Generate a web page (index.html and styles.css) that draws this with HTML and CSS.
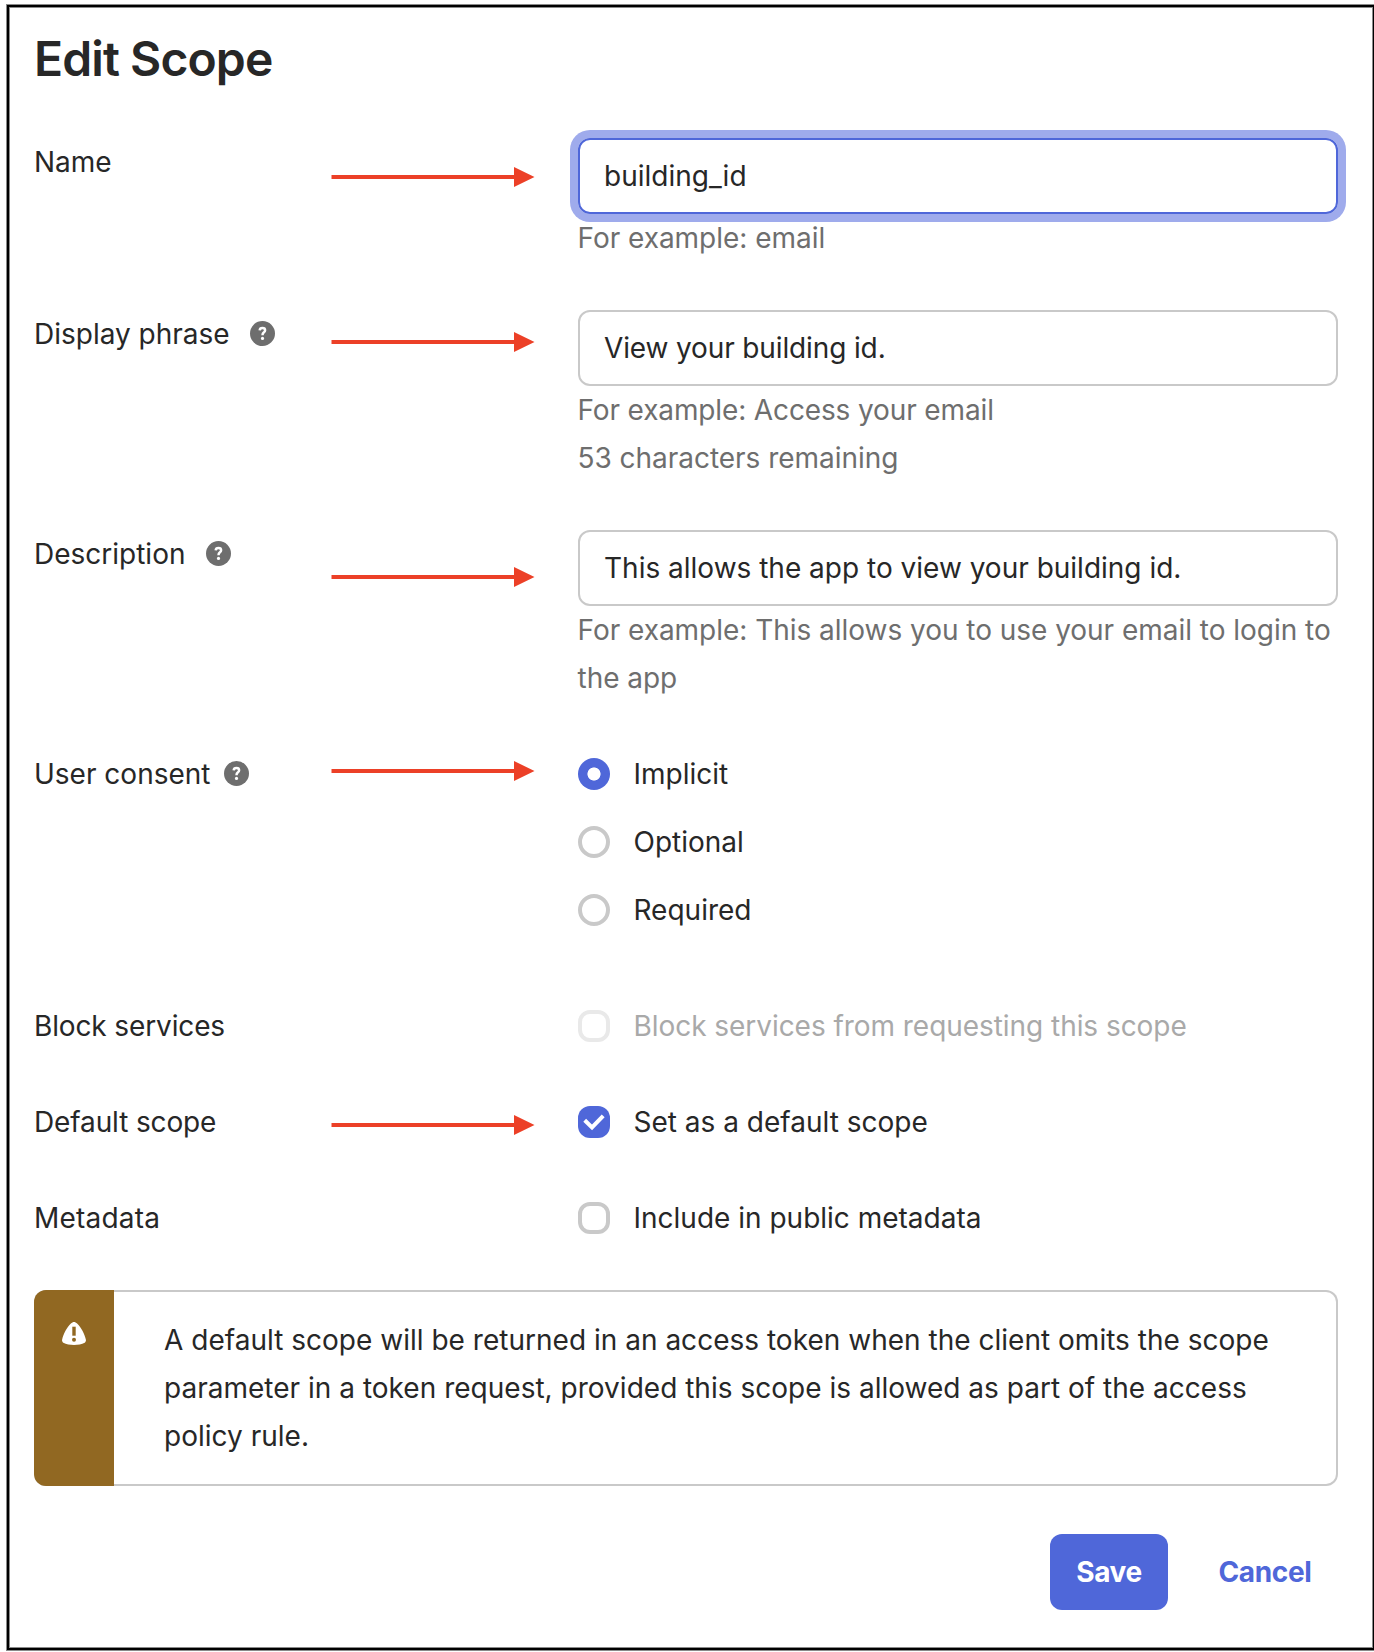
FILE: index.html
```html
<!DOCTYPE html>
<html lang="en">
<head>
<meta charset="utf-8">
<title>Edit Scope</title>
<link rel="stylesheet" href="styles.css">
</head>
<body>
<svg class="defs" width="0" height="0" aria-hidden="true">
  <symbol id="arrow" viewBox="0 0 204 20">
    <path d="M0.5 8H184V12H0.5zM183 0L203.5 10L183 20z" fill="#ec4027"/>
  </symbol>
  <symbol id="help" viewBox="0 0 25 25">
    <circle cx="12.5" cy="12.5" r="12.5" fill="#6e6e6e"/>
    <path d="M9.7 9.4C9.8 7.8 10.9 7.1 12.5 7.1C14.2 7.1 15.1 8 15.1 9.2C15.1 10.4 14.5 10.9 13.7 11.5C12.9 12.1 12.5 12.5 12.5 14.3" fill="none" stroke="#fff" stroke-width="2.5"/>
    <circle cx="12.5" cy="17.4" r="1.6" fill="#fff"/>
  </symbol>
</svg>
<main class="frame">
  <h1 class="title">Edit Scope</h1>
  <form class="form">
    <div class="row">
      <div class="label">Name</div>
      <svg class="arrow arrow-name"><use href="#arrow"/></svg>
      <div class="field">
        <div class="input focused">building_id</div>
        <p class="hint">For example: email</p>
      </div>
    </div>
    <div class="row">
      <div class="label">Display phrase<svg class="help help-display"><use href="#help"/></svg></div>
      <svg class="arrow arrow-display"><use href="#arrow"/></svg>
      <div class="field">
        <div class="input tight">View your building id.</div>
        <p class="hint"><span class="tight">For example: Access your email</span><br>53 characters remaining</p>
      </div>
    </div>
    <div class="row">
      <div class="label">Description<svg class="help help-description"><use href="#help"/></svg></div>
      <svg class="arrow arrow-description"><use href="#arrow"/></svg>
      <div class="field">
        <div class="input">This allows the app to view your building id.</div>
        <p class="hint">For example: This allows you to use your email to login to<br>the app</p>
      </div>
    </div>
    <div class="row row-consent">
      <div class="label">User consent<svg class="help help-consent"><use href="#help"/></svg></div>
      <svg class="arrow arrow-consent"><use href="#arrow"/></svg>
      <div class="field options">
        <div class="option"><span class="radio selected"></span>Implicit</div>
        <div class="option"><span class="radio"></span>Optional</div>
        <div class="option"><span class="radio"></span>Required</div>
      </div>
    </div>
    <div class="row">
      <div class="label tight">Block services</div>
      <div class="field">
        <div class="option disabled"><span class="checkbox"></span>Block services from requesting this scope</div>
      </div>
    </div>
    <div class="row">
      <div class="label tight">Default scope</div>
      <svg class="arrow arrow-default"><use href="#arrow"/></svg>
      <div class="field">
        <div class="option">
          <span class="checkbox checked"><svg width="32" height="32" viewBox="0 0 32 32"><path d="M6.7 14.3L14 21.4L25.2 9.8" fill="none" stroke="#fff" stroke-width="4"/></svg></span>Set as a default scope
        </div>
      </div>
    </div>
    <div class="row">
      <div class="label loose">Metadata</div>
      <div class="field">
        <div class="option"><span class="checkbox"></span>Include in public metadata</div>
      </div>
    </div>
  </form>
  <section class="alert">
    <div class="alert-side">
      <svg width="24" height="23" viewBox="0 0 24 23">
        <path d="M12 0C13 0 14.2.7 15.1 1.6C19 5.5 22.6 11.7 23.9 17.8C24.1 18.9 23.7 20.2 22.7 20.7C19.8 22.2 16 22.9 12 22.9S4.2 22.2 1.3 20.7C.3 20.2-.1 18.9.1 17.8C1.4 11.7 5 5.5 8.9 1.6C9.8.7 11 0 12 0z" fill="#fff"/>
        <path d="M10.3 4.7H13.7V13.7H10.3z" fill="#916822"/>
        <circle cx="12" cy="17.7" r="2" fill="#916822"/>
      </svg>
    </div>
    <p class="alert-text">A default scope will be returned in an access token when the client omits the scope<br>parameter in a token request, provided this scope is allowed as part of the access<br>policy rule.</p>
  </section>
  <div class="actions">
    <button class="button save" type="button">Save</button>
    <button class="button cancel" type="button">Cancel</button>
  </div>
</main>
</body>
</html>
```
FILE: styles.css
```css
* { box-sizing: border-box; }

html { background: #fff; overflow: hidden; }

body {
  margin: 0;
  padding: 5px 0 0 7px;
  height: 1652px;
  overflow: hidden;
  background: #fff;
  color: #272727;
  font: 400 28px/48px Inter, "Liberation Sans", sans-serif;
}

.defs { position: absolute; }

.frame {
  width: 1368px;
  height: 1645px;
  padding: 22px 35px 0 25px;
  border: 2px solid #000;
  box-shadow: 0 0 0 1px #8a8a8a, inset 0 0 0 1px #8a8a8a;
}

.title {
  margin: 0 0 49px;
  font-size: 48px;
  line-height: 60px;
  font-weight: 600;
  letter-spacing: -0.9px;
}

.form { display: flex; flex-direction: column; gap: 48px; }

.row { display: grid; grid-template-columns: 297px 247px 760px; }

.label { display: flex; align-items: center; height: 48px; white-space: nowrap; }

.tight { letter-spacing: -0.13px; }
.loose { letter-spacing: 0.2px; }

.field { grid-column: 3; }

.help { width: 25px; height: 25px; flex: none; margin-top: -1px; }
.help-display { margin-left: 20px; }
.help-description { margin-left: 21px; }
.help-consent { margin-left: 13px; }

.arrow { width: 204px; height: 20px; }
.arrow-name { margin-top: 29px; }
.arrow-display { margin-top: 22px; }
.arrow-description { margin-top: 37px; }
.arrow-consent { margin-top: 11px; }
.arrow-default { margin-top: 17px; }

.input {
  display: flex;
  align-items: center;
  height: 76px;
  padding: 0 24px;
  border: 2px solid #c9c9c9;
  border-radius: 12px;
}

.focused { border-color: #4f67d9; box-shadow: 0 0 0 8px #9fabec; }

.hint { margin: 0 0 0 -0.5px; color: #6e6e6e; white-space: nowrap; letter-spacing: -0.03px; }

.row-consent { margin-bottom: 20px; }

.options { display: flex; flex-direction: column; gap: 20px; }

.option { display: flex; align-items: center; gap: 23.5px; height: 48px; white-space: nowrap; }

.radio, .checkbox {
  flex: none;
  width: 32px;
  height: 32px;
  border: 4px solid #c9c9c9;
}

.radio { border-radius: 50%; }
.checkbox { border-radius: 12px; }
.selected { border: 0; background: radial-gradient(circle, #fff 6.2px, #4f67d9 6.9px); }
.checked { display: flex; border: 0; background: #4f67d9; }
.disabled { color: #a9a9a9; letter-spacing: -0.05px; }
.disabled .checkbox { border-color: #e9e9e9; }

.alert {
  display: flex;
  width: 1304px;
  height: 196px;
  margin-top: 48px;
  border: 2px solid #c9c9c9;
  border-left: 0;
  border-radius: 12px;
}

.alert-side {
  width: 80px;
  margin: -2px 0;
  padding: 32px 28px;
  border-radius: 12px 0 0 12px;
  background: #916822;
  line-height: 0;
}

.alert-text { margin: 0; padding: 24px 0 0 50px; white-space: nowrap; letter-spacing: 0.015px; }

.actions { display: flex; justify-content: flex-end; gap: 24px; width: 1304px; margin-top: 48px; }

.button {
  height: 76px;
  padding: 0;
  border: 0;
  border-radius: 12px;
  background: none;
  color: #4f67d9;
  font: 700 28px/48px Inter, "Liberation Sans", sans-serif;
  letter-spacing: -0.35px;
}

.save { width: 118px; background: #4f67d9; color: #fff; }
.cancel { width: 146px; }
```
